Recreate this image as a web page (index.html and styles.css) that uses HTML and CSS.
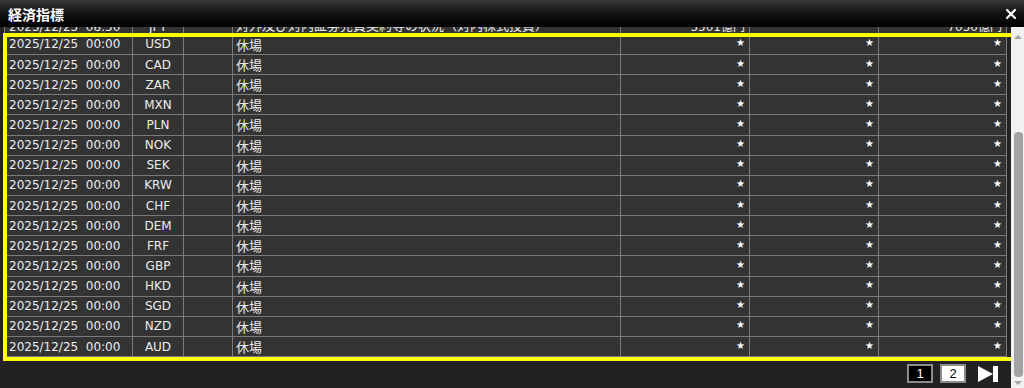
FILE: index.html
```html
<!DOCTYPE html>
<html lang="ja">
<head>
    <meta charset="UTF-8">
    <meta name="viewport" content="width=device-width, initial-scale=1.0">
    <title>経済指標</title>
    <link rel="stylesheet" href="styles.css">
</head>
<body>
    <div class="window">
        <header class="title-bar">
            <h1 class="title">経済指標</h1>
            <button class="close-btn" aria-label="close">
                <svg width="10" height="10" viewBox="0 0 10 10">
                    <path d="M1 1 L9 9 M9 1 L1 9" stroke="#fff" stroke-width="2.2" stroke-linecap="square"/>
                </svg>
            </button>
        </header>

        <div class="window-body">
            <div class="viewport">
                <!-- row above the highlighted block, partly scrolled out -->
                <div class="rows scrolled">
                    <div class="row">
                        <div class="cell">2025/12/25  08:50</div>
                        <div class="cell center">JPY</div>
                        <div class="cell"></div>
                        <div class="cell name">対外及び対内証券売買契約等の状況（対内株式投資）</div>
                        <div class="cell right">5501億円</div>
                        <div class="cell right"></div>
                        <div class="cell right">7050億円</div>
                    </div>
                </div>

                <div class="rows highlight">
                    <div class="row"><div class="cell">2025/12/25  00:00</div><div class="cell center">USD</div><div class="cell"></div><div class="cell name">休場</div><div class="cell right"><span class="star">★</span></div><div class="cell right"><span class="star">★</span></div><div class="cell right"><span class="star">★</span></div></div>
                    <div class="row"><div class="cell">2025/12/25  00:00</div><div class="cell center">CAD</div><div class="cell"></div><div class="cell name">休場</div><div class="cell right"><span class="star">★</span></div><div class="cell right"><span class="star">★</span></div><div class="cell right"><span class="star">★</span></div></div>
                    <div class="row"><div class="cell">2025/12/25  00:00</div><div class="cell center">ZAR</div><div class="cell"></div><div class="cell name">休場</div><div class="cell right"><span class="star">★</span></div><div class="cell right"><span class="star">★</span></div><div class="cell right"><span class="star">★</span></div></div>
                    <div class="row"><div class="cell">2025/12/25  00:00</div><div class="cell center">MXN</div><div class="cell"></div><div class="cell name">休場</div><div class="cell right"><span class="star">★</span></div><div class="cell right"><span class="star">★</span></div><div class="cell right"><span class="star">★</span></div></div>
                    <div class="row"><div class="cell">2025/12/25  00:00</div><div class="cell center">PLN</div><div class="cell"></div><div class="cell name">休場</div><div class="cell right"><span class="star">★</span></div><div class="cell right"><span class="star">★</span></div><div class="cell right"><span class="star">★</span></div></div>
                    <div class="row"><div class="cell">2025/12/25  00:00</div><div class="cell center">NOK</div><div class="cell"></div><div class="cell name">休場</div><div class="cell right"><span class="star">★</span></div><div class="cell right"><span class="star">★</span></div><div class="cell right"><span class="star">★</span></div></div>
                    <div class="row"><div class="cell">2025/12/25  00:00</div><div class="cell center">SEK</div><div class="cell"></div><div class="cell name">休場</div><div class="cell right"><span class="star">★</span></div><div class="cell right"><span class="star">★</span></div><div class="cell right"><span class="star">★</span></div></div>
                    <div class="row"><div class="cell">2025/12/25  00:00</div><div class="cell center">KRW</div><div class="cell"></div><div class="cell name">休場</div><div class="cell right"><span class="star">★</span></div><div class="cell right"><span class="star">★</span></div><div class="cell right"><span class="star">★</span></div></div>
                    <div class="row"><div class="cell">2025/12/25  00:00</div><div class="cell center">CHF</div><div class="cell"></div><div class="cell name">休場</div><div class="cell right"><span class="star">★</span></div><div class="cell right"><span class="star">★</span></div><div class="cell right"><span class="star">★</span></div></div>
                    <div class="row"><div class="cell">2025/12/25  00:00</div><div class="cell center">DEM</div><div class="cell"></div><div class="cell name">休場</div><div class="cell right"><span class="star">★</span></div><div class="cell right"><span class="star">★</span></div><div class="cell right"><span class="star">★</span></div></div>
                    <div class="row"><div class="cell">2025/12/25  00:00</div><div class="cell center">FRF</div><div class="cell"></div><div class="cell name">休場</div><div class="cell right"><span class="star">★</span></div><div class="cell right"><span class="star">★</span></div><div class="cell right"><span class="star">★</span></div></div>
                    <div class="row"><div class="cell">2025/12/25  00:00</div><div class="cell center">GBP</div><div class="cell"></div><div class="cell name">休場</div><div class="cell right"><span class="star">★</span></div><div class="cell right"><span class="star">★</span></div><div class="cell right"><span class="star">★</span></div></div>
                    <div class="row"><div class="cell">2025/12/25  00:00</div><div class="cell center">HKD</div><div class="cell"></div><div class="cell name">休場</div><div class="cell right"><span class="star">★</span></div><div class="cell right"><span class="star">★</span></div><div class="cell right"><span class="star">★</span></div></div>
                    <div class="row"><div class="cell">2025/12/25  00:00</div><div class="cell center">SGD</div><div class="cell"></div><div class="cell name">休場</div><div class="cell right"><span class="star">★</span></div><div class="cell right"><span class="star">★</span></div><div class="cell right"><span class="star">★</span></div></div>
                    <div class="row"><div class="cell">2025/12/25  00:00</div><div class="cell center">NZD</div><div class="cell"></div><div class="cell name">休場</div><div class="cell right"><span class="star">★</span></div><div class="cell right"><span class="star">★</span></div><div class="cell right"><span class="star">★</span></div></div>
                    <div class="row"><div class="cell">2025/12/25  00:00</div><div class="cell center">AUD</div><div class="cell"></div><div class="cell name">休場</div><div class="cell right"><span class="star">★</span></div><div class="cell right"><span class="star">★</span></div><div class="cell right"><span class="star">★</span></div></div>
                </div>

                <div class="pager">
                    <span class="page current">1</span>
                    <span class="page">2</span>
                    <span class="page-last">
                        <svg width="20" height="16" viewBox="0 0 20 16">
                            <polygon points="0,0 15,8 0,16" fill="#fff"/>
                            <rect x="15" y="0" width="5" height="16" fill="#fff"/>
                        </svg>
                    </span>
                </div>
            </div>

            <div class="scrollbar">
                <span class="arrow-up"></span>
                <span class="thumb"></span>
                <span class="arrow-down"></span>
            </div>
        </div>
    </div>
</body>
</html>
```

FILE: styles.css
```css
* {
    margin: 0;
    padding: 0;
    box-sizing: border-box;
}

body {
    font-family: 'DejaVu Sans', 'Noto Sans CJK JP', sans-serif;
    background: #222;
    color: #ececec;
    height: 388px;
    overflow: hidden;
}

.window {
    display: flex;
    flex-direction: column;
    height: 388px;
}

.title-bar {
    height: 27px;
    display: flex;
    align-items: center;
    justify-content: space-between;
    padding: 0 8px;
    background: linear-gradient(to bottom, #3a3a3a 0%, #151515 45%, #000 100%);
}

.title {
    font-family: 'Noto Sans CJK JP', sans-serif;
    font-size: 14px;
    font-weight: bold;
    color: #fff;
    line-height: 1;
}

.close-btn {
    background: none;
    border: none;
    display: flex;
    align-items: center;
}

.window-body {
    flex: 1;
    display: flex;
    overflow: hidden;
}

.viewport {
    flex: 1;
    padding-left: 4px;
    overflow: hidden;
}

.scrolled {
    margin-top: -12.3px;
}

.scrolled .cell {
    align-items: flex-end;
}

.row {
    display: grid;
    grid-template-columns: 128px 51px 49px 388px 129px 129px 128px;
    width: 1003px;
    height: 20.15px;
    background: #333;
    border-left: 1px solid #7a7a7a;
    border-bottom: 1px solid #7a7a7a;
}

.cell {
    display: flex;
    align-items: center;
    padding: 0 4px;
    font-size: 12px;
    white-space: pre;
    overflow: hidden;
    border-right: 1px solid #7a7a7a;
}

.cell.center {
    justify-content: center;
}

.cell.right {
    justify-content: flex-end;
    padding-right: 4px;
}

.cell.name {
    font-family: 'Noto Sans CJK JP', sans-serif;
    font-size: 13px;
    padding-left: 3px;
}

.star {
    font-size: 10px;
    color: #fff;
    margin-bottom: 3px;
}

.highlight {
    position: relative;
}

.highlight::after {
    content: "";
    position: absolute;
    top: -2px;
    left: -1px;
    right: -4px;
    bottom: -4px;
    border: 4px solid #ffff00;
    pointer-events: none;
}

.pager {
    display: flex;
    justify-content: flex-end;
    align-items: center;
    margin-top: 7px;
    padding-right: 13px;
}

.page {
    width: 26px;
    height: 19px;
    border: 2px solid #8c8c8c;
    background: #fff;
    color: #000;
    font-family: 'Liberation Sans', sans-serif;
    font-size: 13px;
    line-height: 15px;
    text-align: center;
    margin-left: 7px;
}

.page.current {
    background: #000;
    color: #fff;
}

.page-last {
    display: flex;
    margin-left: 12px;
}

.scrollbar {
    width: 13px;
    background: #f1f1f1;
    display: flex;
    flex-direction: column;
    align-items: center;
    padding: 8px 0 0 1px;
}

.arrow-up {
    border-left: 4px solid transparent;
    border-right: 4px solid transparent;
    border-bottom: 4px solid #a3a3a3;
}

.thumb {
    width: 9px;
    height: 245px;
    margin-top: 93px;
    border-radius: 4px;
    background: #a3a3a3;
}

.arrow-down {
    margin-top: 4px;
    border-left: 4px solid transparent;
    border-right: 4px solid transparent;
    border-top: 4px solid #a3a3a3;
}
```
